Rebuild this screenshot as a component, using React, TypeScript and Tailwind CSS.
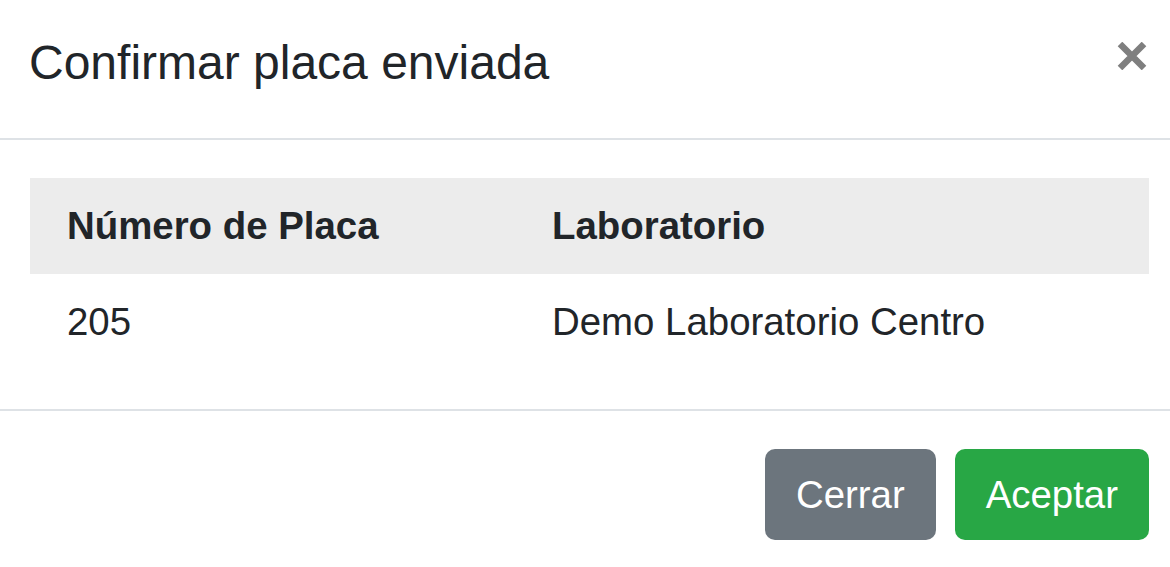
import React from 'react'

const rows = [{ placa: '205', laboratorio: 'Demo Laboratorio Centro' }]

export default function App() {
  return (
    <div
      className="w-[1170px] h-[567px] bg-white text-[#212529] overflow-hidden"
      style={{ fontFamily: '"Liberation Sans", Arial, sans-serif' }}
    >
      {/* header */}
      <div className="flex items-start justify-between h-[140px] border-b-2 border-[#dee2e6]">
        <h5 className="pl-[29px] pt-[27px] text-[48px] leading-[72px] font-normal">
          Confirmar placa enviada
        </h5>
        <button className="mt-[42px] mr-[23px] w-[30px] h-[28px]" aria-label="Close">
          <svg viewBox="0 0 30 28" className="w-[30px] h-[28px]">
            <path d="M3 2 L27 26 M27 2 L3 26" stroke="#7f7f7f" strokeWidth="6.5" fill="none" />
          </svg>
        </button>
      </div>

      {/* body */}
      <div className="pt-[38px] pl-[30px] pr-[21px] h-[271px] border-b-2 border-[#dee2e6]">
        <div className="grid grid-cols-[484px_1fr] text-[38.4px]">
          <div className="bg-[#ececec] h-[96px] flex items-center pl-[37px] font-bold">Número de Placa</div>
          <div className="bg-[#ececec] h-[96px] flex items-center pl-[38px] font-bold">Laboratorio</div>
          {rows.map((r) => (
            <React.Fragment key={r.placa}>
              <div className="h-[96px] flex items-center pl-[37px]">{r.placa}</div>
              <div className="h-[96px] flex items-center pl-[38px]">{r.laboratorio}</div>
            </React.Fragment>
          ))}
        </div>
      </div>

      {/* footer */}
      <div className="flex justify-end gap-[19px] pt-[38px] pr-[21px]">
        <button className="h-[91px] px-[31px] rounded-[10px] bg-[#6c757d] text-white text-[38.4px]">
          Cerrar
        </button>
        <button className="h-[91px] px-[31px] rounded-[10px] bg-[#28a745] text-white text-[38.4px]">
          Aceptar
        </button>
      </div>
    </div>
  )
}
